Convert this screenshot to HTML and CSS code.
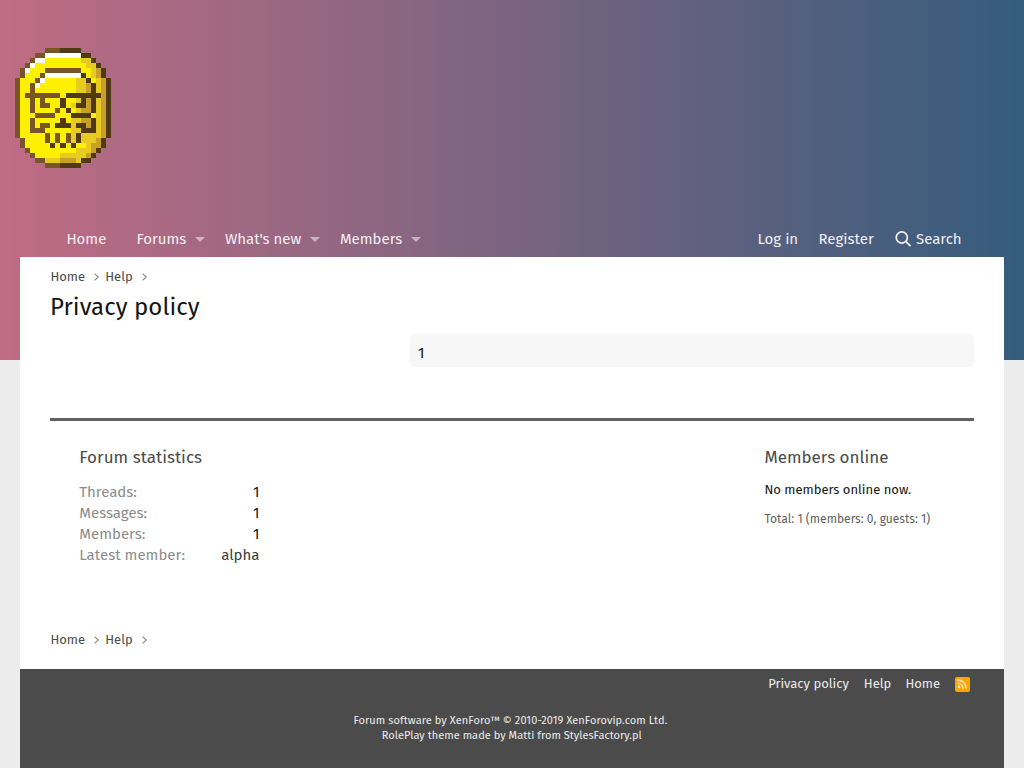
FILE: index.html
```html
<!DOCTYPE html>
<html lang="en">
<head>
<meta charset="utf-8">
<title>Privacy policy</title>
<link rel="stylesheet" href="styles.css">
</head>
<body>
<header class="header"><svg id="coin" class="coin" viewBox="0 0 19 24" preserveAspectRatio="none" shape-rendering="crispEdges" role="img" aria-label="Gold coin"></svg></header>
<nav class="nav">
  <div class="nav-main">
    <a class="n-home"><span>Home</span></a>
    <a class="n-forums"><span>Forums</span><i class="caret"></i></a>
    <a class="n-new"><span>What's new</span><i class="caret"></i></a>
    <a class="n-members"><span>Members</span><i class="caret"></i></a>
  </div>
  <div class="nav-user">
    <a class="n-login">Log in</a>
    <a class="n-register">Register</a>
    <a class="n-search"><svg class="search" viewBox="0 0 16 16"><circle cx="6.8" cy="6.5" r="5.6"/><path d="M11 10.7l4 4"/></svg><span>Search</span></a>
  </div>
</nav>
<main class="page">
  <div class="crumbs"><a class="c-home">Home</a><svg class="chev" viewBox="0 0 5 8"><path d="M.6.6L4.2 4 .6 7.4"/></svg><a class="c-help">Help</a><svg class="chev" viewBox="0 0 5 8"><path d="M.6.6L4.2 4 .6 7.4"/></svg></div>
  <h1 class="title">Privacy policy</h1>
  <div class="block">1</div>
  <section class="widgets">
    <div class="stats">
      <h3 class="h-stats">Forum statistics</h3>
      <dl><dt>Threads:</dt><dd>1</dd></dl>
      <dl><dt>Messages:</dt><dd>1</dd></dl>
      <dl><dt>Members:</dt><dd>1</dd></dl>
      <dl><dt>Latest member:</dt><dd class="alpha">alpha</dd></dl>
    </div>
    <div class="online">
      <h3>Members online</h3>
      <p class="none">No members online now.</p>
      <p class="total">Total: 1 (members: 0, guests: 1)</p>
    </div>
  </section>
  <div class="crumbs"><a class="c-home">Home</a><svg class="chev" viewBox="0 0 5 8"><path d="M.6.6L4.2 4 .6 7.4"/></svg><a class="c-help">Help</a><svg class="chev" viewBox="0 0 5 8"><path d="M.6.6L4.2 4 .6 7.4"/></svg></div>
</main>
<footer class="footer">
  <div class="links"><a class="f-privacy">Privacy policy</a><a class="f-help">Help</a><a class="f-home">Home</a><span class="rss"><svg viewBox="0 0 15 15"><circle cx="4.1" cy="9.9" r="1.3"/><path d="M3 6.2a5 5 0 0 1 5 5M3 3a8.2 8.2 0 0 1 8.2 8.2"/></svg></span></div>
  <div class="copy"><div class="cp1">Forum software by XenForo™ © 2010-2019 XenForovip.com Ltd.</div><div class="cp2">RolePlay theme made by Matti from StylesFactory.pl</div></div>
</footer>
<script src="coin.js"></script>
</body>
</html>
```

FILE: styles.css
```css
* { box-sizing: border-box; margin: 0; padding: 0; }
html { height: 100%; }
body {
  height: 768px;
  overflow: hidden;
  display: flex;
  flex-direction: column;
  background: #ececec linear-gradient(to right, #c06c84, #355c7d) 0 0 / 100% 360px no-repeat;
  font-family: "Fira Sans", "Noto Sans", "Open Sans", sans-serif;
  font-size: 15px;
  color: #141414;
}
a { white-space: nowrap; }
.header { height: 221px; padding: 48px 15px 0; }
.coin { display: block; width: 96px; height: 120px; }
.nav { height: 36px; display: flex; justify-content: space-between; padding: 0 20px; color: #f2eef2; line-height: 36px; }
.nav-main, .nav-user { display: flex; }
.nav-main { padding-left: 46.4px; }
.nav a { display: flex; align-items: center; }
.n-home { width: 70px; }
.n-forums { width: 88.5px; }
.n-new { width: 115px; }
.n-members { width: 81px; }
.caret { margin-left: auto; border: 5px solid transparent; border-top-color: rgba(255,255,255,.5); border-bottom: 0; }
.n-forums .caret { margin-right: 20px; }
.n-new .caret { margin-right: 20px; }
.nav-user { width: 246.5px; }
.n-login { width: 61px; }
.n-register { width: 76.5px; }
.search { width: 16px; height: 16px; margin-right: 5px; fill: none; stroke: #f2eef2; stroke-width: 1.7; stroke-linecap: round; }
.page { height: 412px; flex: none; margin: 0 20px; padding: 10px 30px 0; background: #fff; }
.crumbs { height: 20px; display: flex; align-items: center; padding-left: .4px; font-size: 13px; line-height: 20px; color: #4a4a4a; }
.c-home { width: 43.6px; }
.c-help { width: 36.4px; margin-left: .3px; }
.chev { width: 5px; height: 8px; margin-right: 6px; fill: none; stroke: #858585; stroke-width: 1.1; }
.title { height: 32px; margin-top: 4px; font-size: 24px; font-weight: 400; line-height: 32px; letter-spacing: .05px; }
.block { width: 564px; height: 33px; margin: 11px 0 0 auto; padding: 8px 8px 0; line-height: 22px; border-radius: 5px; background: #f7f7f7; }
.widgets { height: 212px; margin-top: 51px; padding: 25px 0 0 29.3px; display: flex; justify-content: space-between; border-top: 3px solid #606060; }
.stats { width: 180.2px; }
.online { width: 209.6px; }
h3 { font-size: 17px; font-weight: 400; line-height: 24px; color: #4a4a4a; }
.h-stats { margin-bottom: 12px; letter-spacing: .03px; }
dl { display: flex; justify-content: space-between; height: 21px; line-height: 21px; white-space: nowrap; }
dt { color: #8c8c8c; }
.alpha { color: #3c3c3c; }
.none { font-size: 13px; line-height: 20px; margin-top: 10px; white-space: nowrap; }
.total { font-size: 12px; line-height: 18px; margin-top: 10px; white-space: nowrap; color: #606060; letter-spacing: .02px; }
.footer { flex: 1; margin: 0 20px; background: #4b4b4b; color: #ececec; }
.links { display: flex; justify-content: flex-end; height: 30px; padding-right: 34px; line-height: 30px; font-size: 13px; }
.f-privacy { width: 95.7px; }
.f-help { width: 41.6px; }
.f-home { width: 49.6px; }
.rss { width: 15px; height: 15px; margin-top: 8px; border-radius: 2px; background: #ffa500; }
.rss svg { display: block; width: 15px; height: 15px; fill: #fff0d4; }
.rss path { fill: none; stroke: #fff0d4; stroke-width: 1.3; stroke-linecap: round; }
.copy { margin-top: 14px; display: flex; flex-direction: column; font-size: 11px; line-height: 15px; white-space: nowrap; }
.cp1 { margin-left: 333.4px; letter-spacing: .08px; }
.cp2 { margin-left: 361.8px; letter-spacing: .03px; }
```

FILE: coin.js
```js
// One letter per pixel: brown, dark, yellow, gold, ochre, white.
const colors = { B: '#785524', D: '#503a14', Y: '#fff000', G: '#e8cb20', O: '#c8a028', W: '#ffffff' };
const rows = [
  '......BBBDDDD......',
  '....BBWWWWWWWDD....',
  '...BWWYYYYYYYGGD...',
  '..BWYYYYYYYYYYGGD..',
  '.BWYYYBBBBBBBYYGOD.',
  '.BYYYBWWWWWWWDYGOD.',
  'BYYYBWYYYYYYGGDYGOD',
  'BYYBWYYYYYYYGGODGOD',
  'BYYBYYYYYYYYGGODGOD',
  'BYBBBBBBBYDDDDDDDOD',
  'BYYBYBYYYDYYGDODGOD',
  'BYYBYBBYYDYGDDODGOD',
  'BYYBYYYYBYDYGOODGOD',
  'BYYYBBBBYYYDDDDYGOD',
  'BYYBYYYYYDYGGOODGOD',
  'BYYBYBBYDDDGDDODGOD',
  'BYYBBBYYYYYGGDDDGOD',
  'BYYYYYBYBYBGDGGGGOD',
  '.BYYYYBYBYBGDGGGOD.',
  '.BYYYYYDYDYDYYGOOD.',
  '..BYYYYYYYYYGGGOD..',
  '...BYYYYYGGGGGOD...',
  '....BBGGGOOOGDD....',
  '......BBBDDDD......'
];
const coin = document.getElementById('coin');
rows.forEach((row, y) => [...row].forEach((c, x) => {
  if (c === '.') return;
  const r = document.createElementNS('http://www.w3.org/2000/svg', 'rect');
  r.setAttribute('x', x);
  r.setAttribute('y', y);
  r.setAttribute('width', 1);
  r.setAttribute('height', 1);
  r.setAttribute('fill', colors[c]);
  coin.appendChild(r);
}));
```
